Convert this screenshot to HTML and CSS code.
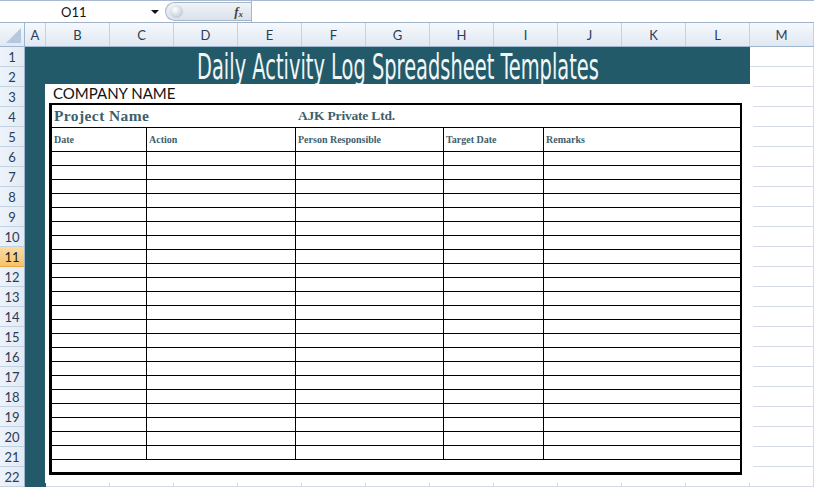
FILE: index.html
```html
<!DOCTYPE html>
<html>
<head>
<meta charset="utf-8">
<link rel="stylesheet" href="styles.css">
</head>
<body>
<div class="formula-bar">
  <div class="namebox"><span class="ref">O11</span><span class="drop"></span></div>
  <div class="fx-pill"><span class="orb"></span><span class="fx">f<sub>x</sub></span></div>
  <div class="formula-input"></div>
</div>
<div class="col-headers">
  <div class="corner"><span class="tri"></span></div>
  <div class="ch ch-a">A</div>
  <div class="ch">B</div><div class="ch">C</div><div class="ch">D</div><div class="ch">E</div>
  <div class="ch">F</div><div class="ch">G</div><div class="ch">H</div><div class="ch">I</div>
  <div class="ch">J</div><div class="ch">K</div><div class="ch">L</div><div class="ch">M</div>
</div>
<div class="sheet">
  <div class="row-headers">
    <div class="rh">1</div><div class="rh">2</div><div class="rh">3</div><div class="rh">4</div>
    <div class="rh">5</div><div class="rh">6</div><div class="rh">7</div><div class="rh">8</div>
    <div class="rh">9</div><div class="rh">10</div><div class="rh rh-sel">11</div><div class="rh">12</div>
    <div class="rh">13</div><div class="rh">14</div><div class="rh">15</div><div class="rh">16</div>
    <div class="rh">17</div><div class="rh">18</div><div class="rh">19</div><div class="rh">20</div>
    <div class="rh">21</div><div class="rh">22</div>
  </div>
  <div class="canvas">
    <div class="title-cell"><span class="title">Daily Activity Log Spreadsheet Templates</span></div>
    <div class="col-a-fill"></div>

    <div class="picture">
      <div class="company">COMPANY NAME</div>
      <div class="log">
        <div class="proj-row">
          <div class="proj">Project Name</div>
          <div class="proj proj-value">AJK Private Ltd.</div>
        </div>
        <div class="grid-row head-row">
          <div>Date</div><div>Action</div><div>Person Responsible</div><div>Target Date</div><div>Remarks</div>
        </div>
        <div class="grid-row"><div></div><div></div><div></div><div></div><div></div></div>
        <div class="grid-row"><div></div><div></div><div></div><div></div><div></div></div>
        <div class="grid-row"><div></div><div></div><div></div><div></div><div></div></div>
        <div class="grid-row"><div></div><div></div><div></div><div></div><div></div></div>
        <div class="grid-row"><div></div><div></div><div></div><div></div><div></div></div>
        <div class="grid-row"><div></div><div></div><div></div><div></div><div></div></div>
        <div class="grid-row"><div></div><div></div><div></div><div></div><div></div></div>
        <div class="grid-row"><div></div><div></div><div></div><div></div><div></div></div>
        <div class="grid-row"><div></div><div></div><div></div><div></div><div></div></div>
        <div class="grid-row"><div></div><div></div><div></div><div></div><div></div></div>
        <div class="grid-row"><div></div><div></div><div></div><div></div><div></div></div>
        <div class="grid-row"><div></div><div></div><div></div><div></div><div></div></div>
        <div class="grid-row"><div></div><div></div><div></div><div></div><div></div></div>
        <div class="grid-row"><div></div><div></div><div></div><div></div><div></div></div>
        <div class="grid-row"><div></div><div></div><div></div><div></div><div></div></div>
        <div class="grid-row"><div></div><div></div><div></div><div></div><div></div></div>
        <div class="grid-row"><div></div><div></div><div></div><div></div><div></div></div>
        <div class="grid-row"><div></div><div></div><div></div><div></div><div></div></div>
        <div class="grid-row"><div></div><div></div><div></div><div></div><div></div></div>
        <div class="grid-row"><div></div><div></div><div></div><div></div><div></div></div>
        <div class="grid-row"><div></div><div></div><div></div><div></div><div></div></div>
        <div class="grid-row"><div></div><div></div><div></div><div></div><div></div></div>
        <div class="blank-row"></div>
      </div>
    </div>
  </div>
</div>
</body>
</html>
```
FILE: styles.css
```css
* { box-sizing: border-box; }
html, body {
  margin: 0;
  padding: 0;
  width: 814px;
  height: 489px;
  overflow: hidden;
  background: #ffffff;
  font-family: Lato, "Open Sans", sans-serif;
}

/* ---------- formula bar ---------- */
.formula-bar {
  display: flex;
  height: 23px;
  border-top: 1px solid #a9bad0;
  border-bottom: 1px solid #9fb2ca;
  background: #ffffff;
}
.namebox {
  position: relative;
  width: 165px;
  display: flex;
  align-items: center;
}
.ref {
  margin-left: 61px;
  font-size: 13px;
  color: #111;
}
.drop {
  position: absolute;
  left: 151px;
  top: 9px;
  width: 0;
  height: 0;
  border-left: 4px solid transparent;
  border-right: 4px solid transparent;
  border-top: 4px solid #111;
}
.fx-pill {
  position: relative;
  width: 86px;
  margin: 1px 0;
  border: 1px solid #a7b6c9;
  border-right: none;
  border-radius: 11px 0 0 11px;
  background: linear-gradient(#f1f4f8, #d9e1eb);
  display: flex;
  align-items: center;
}
.orb {
  margin-left: 4px;
  width: 13px;
  height: 13px;
  border-radius: 50%;
  background: radial-gradient(circle at 40% 35%, #ffffff, #c5ced9 70%, #aab6c4);
}
.fx {
  margin-left: auto;
  margin-right: 8px;
  font-family: "Liberation Serif", serif;
  font-style: italic;
  font-weight: bold;
  font-size: 13px;
  color: #444;
}
.fx sub { font-size: 9px; vertical-align: -1px; }
.formula-input {
  flex: 1;
  border-left: 1px solid #a7b6c9;
  background: #fff;
}

/* ---------- column headers ---------- */
.col-headers {
  display: flex;
  height: 24px;
  background: linear-gradient(#f6f9fc, #e0e8f2);
  border-bottom: 1px solid #9eb6ce;
}
.corner {
  position: relative;
  width: 25px;
  border-right: 1px solid #9eb6ce;
}
.tri {
  position: absolute;
  right: 3px;
  bottom: 3px;
  width: 15px;
  height: 15px;
  background: #b7c8dc;
  clip-path: polygon(100% 0, 100% 100%, 0 100%);
}
.ch {
  width: 64px;
  display: flex;
  align-items: center;
  justify-content: center;
  border-right: 1px solid #c3d2e3;
  font-size: 13px;
  color: #2a3d57;
}
.ch-a { width: 21px; }

/* ---------- sheet body ---------- */
.sheet {
  display: flex;
}
.row-headers {
  width: 25px;
  display: flex;
  flex-direction: column;
  background: linear-gradient(90deg, #eef3fa, #e2eaf4);
  border-right: 1px solid #9eb6ce;
}
.rh {
  height: 20px;
  display: flex;
  align-items: center;
  justify-content: center;
  border-bottom: 1px solid #c3d2e3;
  font-size: 13px;
  color: #2a3d57;
}
.rh-sel {
  background: linear-gradient(#fbdca4, #f4c46b);
  border-bottom-color: #f0a640;
  color: #222;
}

.canvas {
  position: relative;
  flex: 1;
  display: grid;
  grid-template-columns: 21px repeat(12, 64px);
  grid-template-rows: repeat(22, 20px);
  background-image:
    repeating-linear-gradient(to bottom, transparent 0 19px, #d4dbe6 19px 20px),
    repeating-linear-gradient(to right, transparent 0 63px, #d4dbe6 63px 64px);
  background-position: 0 0, 21px 0;
}
.title-cell {
  grid-column: 1 / 13;
  grid-row: 1 / 3;
  background: #235a69;
  display: flex;
  align-items: center;
  justify-content: center;
  padding-left: 21px;
  overflow: hidden;
}
.title {
  display: inline-block;
  font-family: "DejaVu Sans Condensed", "DejaVu Sans", sans-serif;
  font-stretch: condensed;
  font-size: 36px;
  line-height: 1;
  color: #f2f6f7;
  transform: scaleX(0.6);
  white-space: nowrap;
  margin-top: 0;
}
.col-a-fill {
  grid-column: 1;
  grid-row: 3 / 23;
  background: #235a69;
}

/* ---------- floating picture ---------- */
.picture {
  position: absolute;
  left: 20px;
  top: 37px;
  width: 708px;
  height: 399px;
  background: #ffffff;
  padding-left: 4px;
}
.company {
  height: 19px;
  padding-left: 4px;
  padding-top: 1px;
  font-size: 15px;
  line-height: 17px;
  color: #111;
}
.log {
  width: 693px;
  border: 2px solid #000;
  border-left-width: 3px;
  border-bottom-width: 3px;
}
.proj-row {
  display: grid;
  grid-template-columns: 243px 1fr;
  height: 23px;
  border-bottom: 1px solid #000;
  align-items: center;
}
.proj {
  font-family: "Liberation Serif", serif;
  font-weight: bold;
  font-size: 15.5px;
  color: #3e5f6b;
  padding-left: 2px;
  letter-spacing: 0.4px;
}
.proj-value {
  padding-left: 3px;
  font-size: 13.5px;
  letter-spacing: -0.2px;
}
.grid-row {
  display: grid;
  grid-template-columns: 94px 149px 148px 100px 1fr;
  height: 14px;
  border-bottom: 1px solid #000;
}
.grid-row > div + div { border-left: 1px solid #000; }
.head-row { height: 24px; }
.head-row > div {
  display: flex;
  align-items: center;
  padding-left: 2px;
  font-family: "Liberation Serif", serif;
  font-weight: bold;
  font-size: 10px;
  color: #3e5f6b;
}
.blank-row { height: 12px; }
```
